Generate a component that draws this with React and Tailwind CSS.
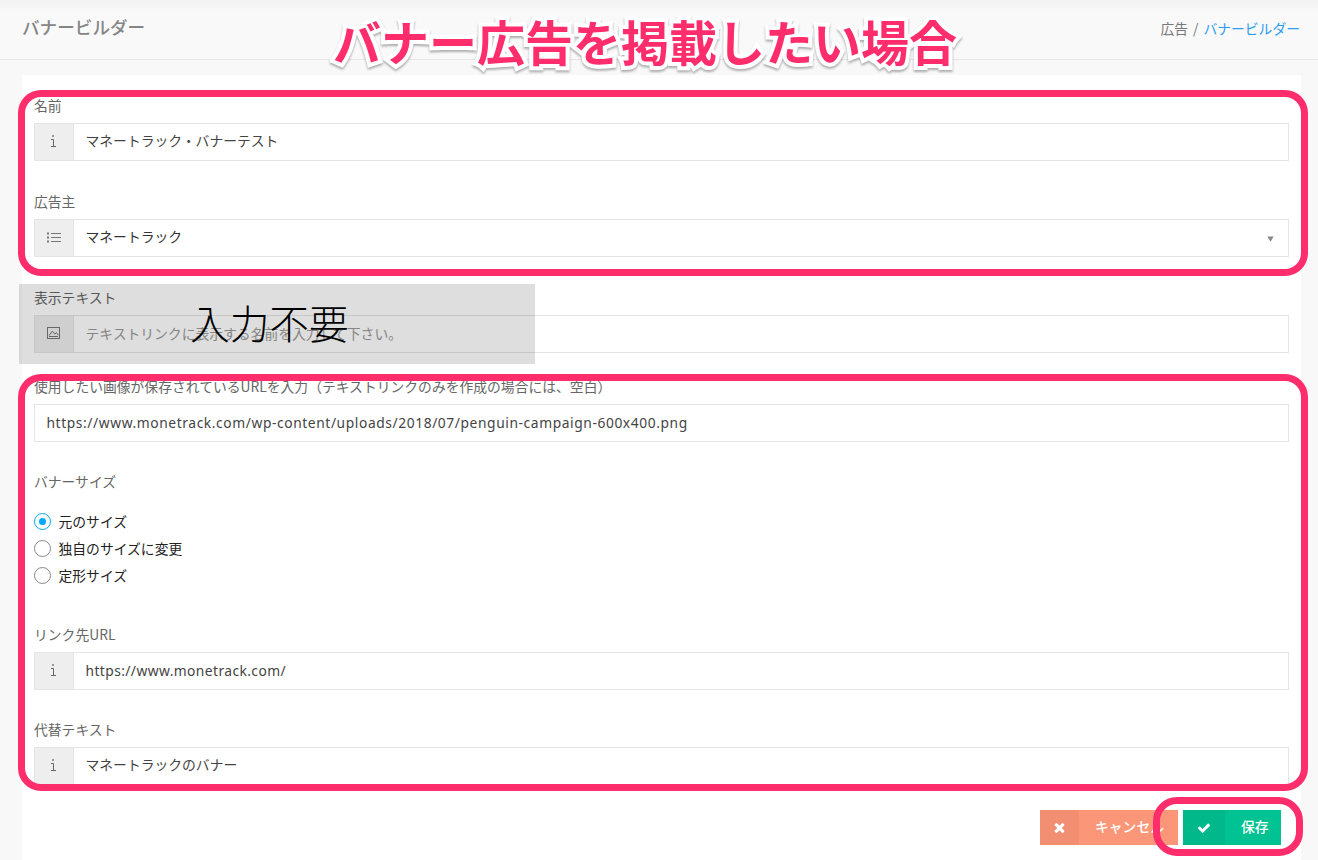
import React, { useState } from 'react';

const SIZES = ['元のサイズ', '独自のサイズに変更', '定形サイズ'];

const InfoIcon = () => (
  <svg className="mr-[2px] mb-[2px]" width="14" height="14" viewBox="0 0 14 14" fill="none" stroke="#666" strokeWidth="1">
    <path d="M5 5.5h2.5v6.5M5 12.5h5" />
    <rect x="6.2" y="1.2" width="1.6" height="1.6" fill="#666" stroke="none" />
  </svg>
);

const ListIcon = () => (
  <svg className="mr-px mb-[2px]" width="16" height="12" viewBox="0 0 16 12" stroke="#777" strokeWidth="1">
    <path d="M5 2.5H15M5 6.5H15M5 10.5H15" />
    <path d="M1 2.5h2M1 6.5h2M1 10.5h2" strokeWidth="2" />
  </svg>
);

const ImageIcon = () => (
  <svg className="mb-[3px]" width="14" height="14" viewBox="0 0 14 14" fill="none" stroke="#777" strokeWidth="1">
    <rect x="0.5" y="1.5" width="12" height="11" />
    <path d="M2 9.5l3.3-4.3 2.5 3 1.6-1.6 2 2.6M2 10.5h9" />
  </svg>
);

const TimesIcon = () => (
  <svg width="15" height="15" viewBox="0 0 1792 1792" fill="currentColor">
    <path d="M1490 1322q0 40-28 68l-136 136q-28 28-68 28t-68-28l-294-294-294 294q-28 28-68 28t-68-28l-136-136q-28-28-28-68t28-68l294-294-294-294q-28-28-28-68t28-68l136-136q28-28 68-28t68 28l294 294 294-294q28-28 68-28t68 28l136 136q28 28 28 68t-28 68l-294 294 294 294q28 28 28 68z" />
  </svg>
);

const CheckIcon = () => (
  <svg width="14" height="14" viewBox="0 0 1792 1792" fill="currentColor">
    <path d="M1671 566q0 40-28 68l-724 724-136 136q-28 28-68 28t-68-28l-136-136-362-362q-28-28-28-68t28-68l136-136q28-28 68-28t68 28l294 295 656-657q28-28 68-28t68 28l136 136q28 28 28 68z" />
  </svg>
);

const Field = ({ label, icon, children }) => (
  <div>
    <div className="h-[18px] leading-[18px] mb-[9px] text-[#666] whitespace-nowrap">{label}</div>
    <div className="flex h-[38px] border border-[#e5e5e5]">
      {icon && (
        <div className="w-[39px] shrink-0 flex items-center justify-center bg-[#eee] border-r border-[#e5e5e5]">
          {icon}
        </div>
      )}
      <div className="flex-1 flex items-center justify-between pl-[11.5px] pr-[14px] text-[#444] whitespace-nowrap">
        {children}
      </div>
    </div>
  </div>
);

const App = () => {
  const [size, setSize] = useState(0);

  return (
    <div className="relative w-full h-[860px] overflow-hidden bg-[#f8f8f8] text-[13.8px] font-['Noto_Sans_CJK_JP',sans-serif]">
      <header className="flex items-center justify-between h-[60px] pl-[22px] pr-[18px] border-b border-[#e6e6e6] bg-linear-to-b from-[#f2f2f2] to-[#f9f9f9] to-20%">
        <h1 className="text-[17.6px] font-medium text-[#858585] leading-6 mb-[6px]">バナービルダー</h1>
        <div className="flex gap-[5px] leading-5 mb-1 text-[#777]">
          <span>広告</span>
          <span>/</span>
          <a className="text-[#2b9df4]">バナービルダー</a>
        </div>
      </header>

      <main className="mt-[15px] ml-[22px] mr-[17px] h-[800px] bg-white pt-[21px] pl-3 pr-3">
        <div className="flex flex-col gap-[31px]">
          <Field label="名前" icon={<InfoIcon />}>
            <span className="pb-[3px]">マネートラック・バナーテスト</span>
          </Field>
          <Field label="広告主" icon={<ListIcon />}>
            <span className="text-[#333] pb-[3px]">マネートラック</span>
            <svg className="mt-px" width="7" height="6" viewBox="0 0 7 6" fill="#888">
              <path d="M0.3 0.5h6.4L3.5 5.8z" />
            </svg>
          </Field>
          <Field label="表示テキスト" icon={<ImageIcon />}>
            <span className="text-[#999] pb-px">テキストリンクに表示する名前を入力して下さい。</span>
          </Field>
        </div>

        <div className="mt-6">
          <Field label="使用したい画像が保存されているURLを入力（テキストリンクのみを作成の場合には、空白）">
            <span className="font-['Noto_Sans'] tracking-[0.59px]">
              https://www.monetrack.com/wp-content/uploads/2018/07/penguin-campaign-600x400.png
            </span>
          </Field>
        </div>

        <div className="mt-[30px]">
          <div className="h-[18px] leading-[18px] text-[#666]">バナーサイズ</div>
          <div className="mt-[18px]">
            {SIZES.map((name, i) => (
              <div
                key={name}
                className="flex items-center h-[27px] gap-[7.5px] text-[#222] cursor-pointer"
                onClick={() => setSize(i)}
              >
                <span
                  className={
                    size === i
                      ? 'flex items-center justify-center w-[17px] h-[17px] rounded-full border border-[#03a9f4]'
                      : 'w-[17px] h-[17px] rounded-full border border-[#888]'
                  }
                >
                  {size === i && <span className="w-[7px] h-[7px] rounded-full bg-[#03a9f4]" />}
                </span>
                {name}
              </div>
            ))}
          </div>
        </div>

        <div className="flex flex-col gap-[30px] mt-[36px]">
          <Field label="リンク先URL" icon={<InfoIcon />}>
            <span className="font-['Noto_Sans'] tracking-[0.42px]">https://www.monetrack.com/</span>
          </Field>
          <Field label="代替テキスト" icon={<InfoIcon />}>
            <span className="pb-[3px]">マネートラックのバナー</span>
          </Field>
        </div>

        <div className="flex justify-end gap-[5px] mt-[25px] mr-2 text-white font-medium">
          <button className="flex w-[138px] h-[35px] bg-[#fb9678]">
            <span className="flex items-center justify-center w-[39px] h-full bg-[#f28f72]">
              <TimesIcon />
            </span>
            <span className="flex items-center h-full pl-4 pb-[2px]">キャンセル</span>
          </button>
          <button className="flex w-[98px] h-[35px] bg-[#00c292]">
            <span className="flex items-center justify-center w-[42px] h-full bg-[#00b88a]">
              <CheckIcon />
            </span>
            <span className="flex items-center h-full pl-4 pb-[2px]">保存</span>
          </button>
        </div>
      </main>

      {/* annotations drawn over the form */}
      <div className="absolute left-[333px] top-[5px] leading-[70px] text-[48px] font-bold whitespace-nowrap text-[#ff2d6b] [-webkit-text-stroke:8px_white] [paint-order:stroke_fill] [stroke-linejoin:round] drop-shadow-[0_2px_1px_rgba(0,0,0,0.3)]">
        バナー広告を掲載したい場合
      </div>
      <div className="absolute left-[18px] top-[90px] w-[1290px] h-[186px] border-[7px] border-[#ff2d6b] rounded-[23px]" />
      <div className="absolute left-[19px] top-[284px] w-[516px] h-[80px] bg-black/13" />
      <div className="absolute left-[190px] top-[293px] leading-[58px] text-[39.7px] font-light text-black whitespace-nowrap">
        入力不要
      </div>
      <div className="absolute left-[18px] top-[374px] w-[1290px] h-[417px] border-[7px] border-[#ff2d6b] rounded-[23px]" />
      <div className="absolute left-[1153px] top-[797px] w-[150px] h-[59px] border-[7px] border-[#ff2d6b] rounded-[24px]" />
    </div>
  );
};

export default App;
